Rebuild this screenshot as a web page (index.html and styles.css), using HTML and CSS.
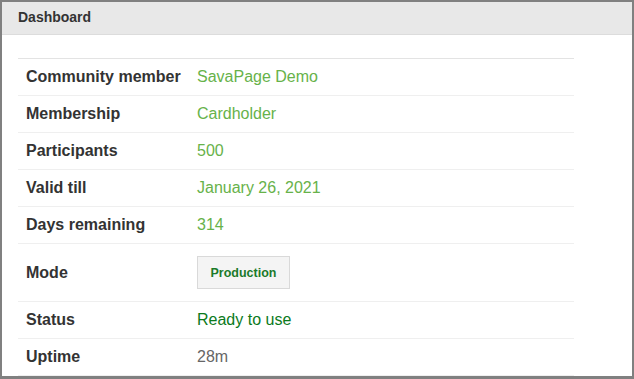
FILE: index.html
```html
<!DOCTYPE html>
<html lang="en">
<head>
    <meta charset="UTF-8">
    <title>Dashboard</title>
    <link rel="stylesheet" href="styles.css">
</head>
<body>
    <div class="frame">
        <div class="panel-header">Dashboard</div>

        <div class="panel-body">
            <div class="info-table">
                <div class="info-row">
                    <span class="label">Community member</span>
                    <span class="value">SavaPage Demo</span>
                </div>
                <div class="info-row">
                    <span class="label">Membership</span>
                    <span class="value">Cardholder</span>
                </div>
                <div class="info-row">
                    <span class="label">Participants</span>
                    <span class="value">500</span>
                </div>
                <div class="info-row">
                    <span class="label">Valid till</span>
                    <span class="value">January 26, 2021</span>
                </div>
                <div class="info-row">
                    <span class="label">Days remaining</span>
                    <span class="value">314</span>
                </div>
                <div class="info-row">
                    <span class="label">Mode</span>
                    <span class="value"><button class="mode-btn">Production</button></span>
                </div>
                <div class="info-row">
                    <span class="label">Status</span>
                    <span class="value ok">Ready to use</span>
                </div>
                <div class="info-row">
                    <span class="label">Uptime</span>
                    <span class="value muted">28m</span>
                </div>
            </div>
        </div>
    </div>
</body>
</html>
```

FILE: styles.css
```css
:root {
    --value-color: #67b24a;
    --ok-color: #0b7a1c;
}

body {
    font-family: "Liberation Sans", Arial, sans-serif;
    margin: 0;
    padding: 0;
    background: white;
}

.frame {
    height: 379px;
    box-sizing: border-box;
    border: 2px solid #808080;
    border-bottom-width: 3px;
    overflow: hidden;
    background: white;
}

.panel-header {
    height: 32px;
    line-height: 31px;
    padding-left: 16px;
    background-color: #e8e8e8;
    border-bottom: 1px solid #dcdcdc;
    font-size: 14px;
    font-weight: bold;
    color: #333;
}

.panel-body {
    padding: 23px 16px 0;
}

.info-table {
    width: 556px;
    border-top: 1px solid #e3e3e3;
}

.info-row {
    display: grid;
    grid-template-columns: 171px 1fr;
    align-items: center;
    border-bottom: 1px solid #efefef;
    font-size: 16px;
    line-height: 20px;
}

.info-row > span {
    padding: 8px;
}

.label {
    font-weight: bold;
    color: #333;
}

.value {
    color: var(--value-color);
}

.value.ok {
    color: var(--ok-color);
}

.value.muted {
    color: #666;
}

.mode-btn {
    display: block;
    width: 93px;
    height: 33px;
    margin: 4px 0;
    padding: 0;
    box-sizing: border-box;
    background: #f4f4f4;
    border: 1px solid #d9d9d9;
    border-radius: 0;
    font-family: inherit;
    font-size: 12.5px;
    font-weight: bold;
    color: #1a7a2a;
    cursor: pointer;
}
```
